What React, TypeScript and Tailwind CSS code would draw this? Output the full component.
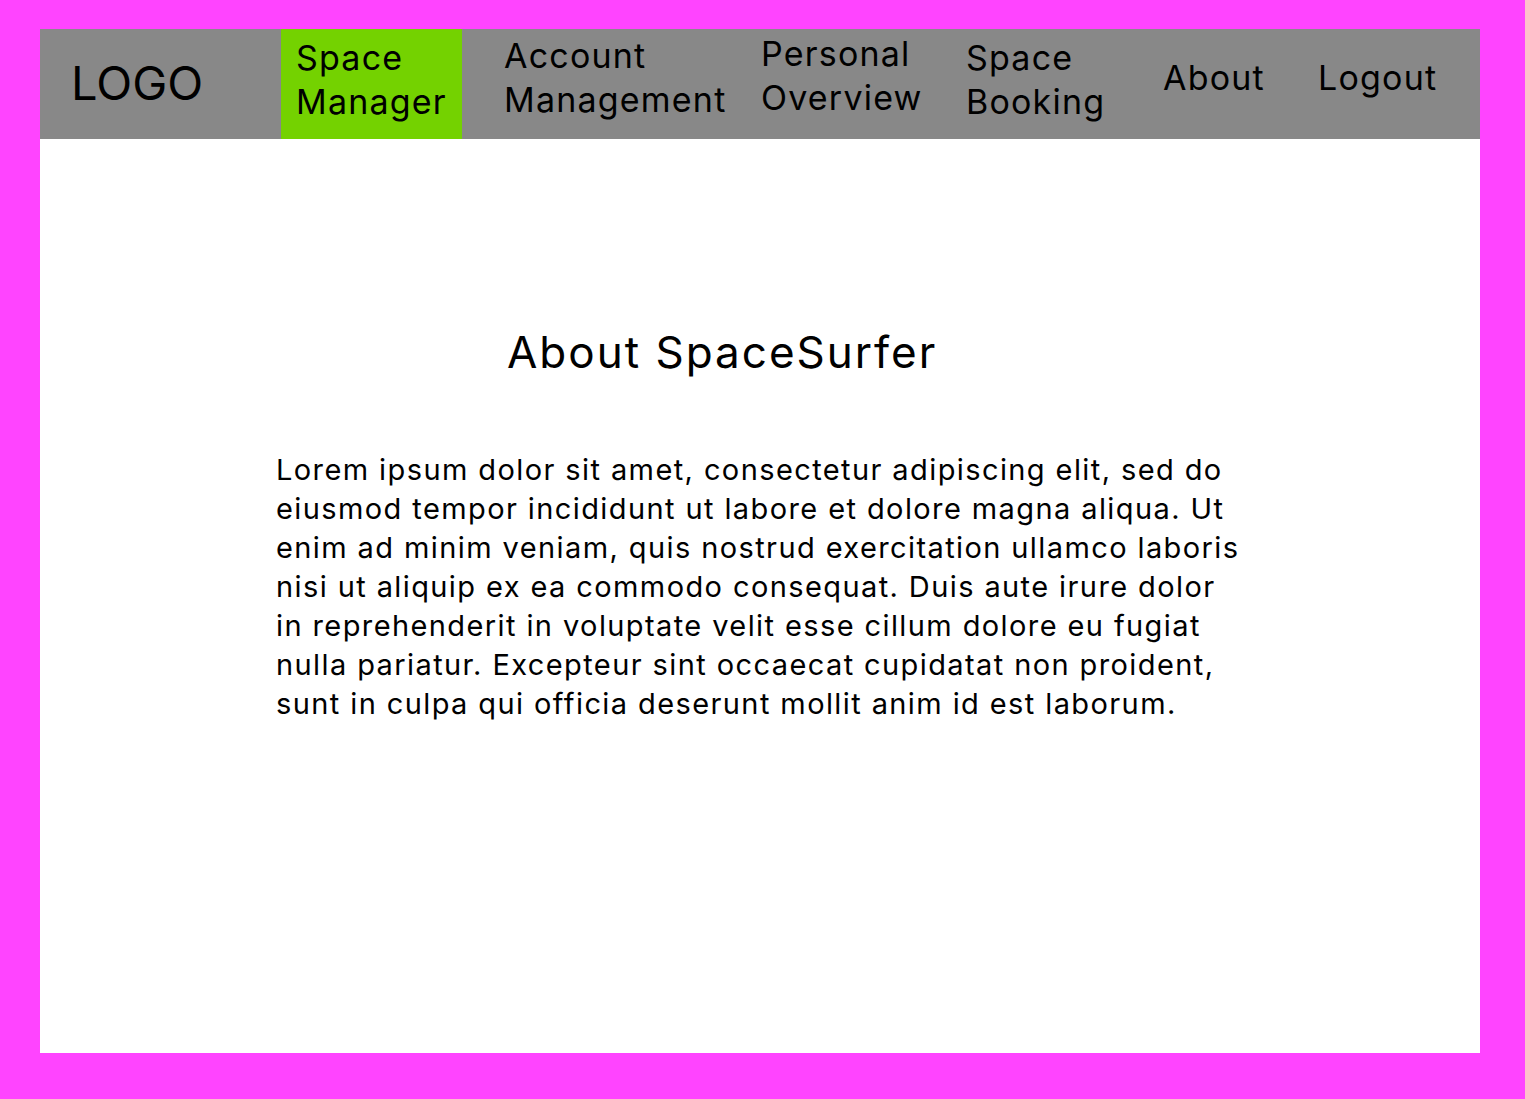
export default function App() {
  const font = { fontFamily: 'Inter, "Noto Sans", sans-serif' };
  return (
    <div className="min-h-[1099px] w-[1525px] bg-[#ff44ff] pl-[40px] pr-[45px] pt-[29px] pb-[46px]" style={font}>
      <div className="flex h-[1024px] flex-col bg-white">
        <nav className="flex h-[110px] shrink-0 items-stretch bg-[#888888] text-black">
          <div className="flex w-[241px] items-center pl-[31px] pb-[4px] text-[47px] leading-none">LOGO</div>
          <div className="flex w-[181px] flex-col justify-center bg-[#74d200] pl-[15px] pb-[9px] text-[34px] leading-[44px] tracking-[1.2px]">
            <span>Space</span>
            <span>Manager</span>
          </div>
          <div className="ml-[42px] flex w-[257px] flex-col justify-center pb-[13px] text-[34px] leading-[44px] tracking-[1.2px]">
            <span>Account</span>
            <span>Management</span>
          </div>
          <div className="flex w-[205px] flex-col justify-center pb-[17px] text-[34px] leading-[44px] tracking-[1.2px]">
            <span>Personal</span>
            <span>Overview</span>
          </div>
          <div className="flex w-[197px] flex-col justify-center pb-[9px] text-[34px] leading-[44px] tracking-[1.2px]">
            <span>Space</span>
            <span>Booking</span>
          </div>
          <div className="flex w-[155px] items-center pb-[13px] text-[34px] leading-[44px] tracking-[1.2px]">About</div>
          <div className="flex items-center pb-[13px] text-[34px] leading-[44px] tracking-[1.2px]">Logout</div>
        </nav>
        <div className="flex flex-col">
          <h1 className="mt-[185px] pl-[467px] text-[44px] font-normal leading-[56px] tracking-[2px]">About SpaceSurfer</h1>
          <p className="mt-[70px] ml-[236px] w-[975px] text-[29px] leading-[39px] tracking-[1.4px]">
            Lorem ipsum dolor sit amet, consectetur adipiscing elit, sed do eiusmod tempor incididunt ut labore et dolore magna aliqua. Ut enim ad minim veniam, quis nostrud exercitation ullamco laboris nisi ut aliquip ex ea commodo consequat. Duis aute irure dolor in reprehenderit in voluptate velit esse cillum dolore eu fugiat nulla pariatur. Excepteur sint occaecat cupidatat non proident, sunt in culpa qui officia deserunt mollit anim id est laborum.
          </p>
        </div>
      </div>
    </div>
  );
}
